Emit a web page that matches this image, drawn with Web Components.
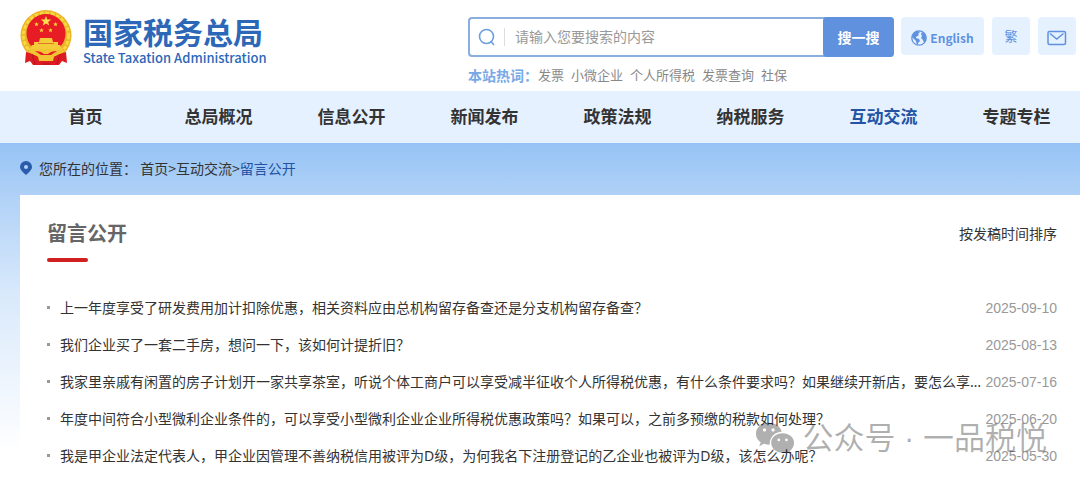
<!DOCTYPE html>
<html lang="zh-CN">
  <head>
    <meta charset="utf-8" />
    <title>留言公开 - 国家税务总局</title>
    <meta name="viewport" content="width=device-width, initial-scale=1" />

    <style>
      body {
        --blue: #5f91de;
        --deep-blue: #2353a5;
        --pale: #e5f1ff;
        margin: 0;
        font: 14px/20px "Noto Sans CJK SC", sans-serif;
        color: #333;
        background: #fff;
        overflow: hidden;
      }
    </style>

    <template id="site-header">
      <style>
        :host {
          display: flex;
          justify-content: space-between;
          padding: 8px 4px 6px 20px;
        }
        .tools {
          display: grid;
          grid-template-columns: 426px auto;
          column-gap: 7px;
          row-gap: 8px;
          padding-top: 9px;
        }
      </style>
      <site-logo></site-logo>
      <div class="tools">
        <search-box></search-box>
        <quick-links></quick-links>
        <hot-words></hot-words>
      </div>
    </template>

    <template id="site-logo">
      <style>
        :host {
          display: block;
        }
        a {
          display: flex;
          gap: 11px;
          color: #2c67b8;
          text-decoration: none;
        }
        svg {
          width: 52px;
          height: 58px;
        }
        .name {
          display: block;
          font-size: 30px;
          line-height: 36px;
          font-weight: 700;
          margin-top: 5px;
        }
        .en {
          display: block;
          font-size: 13px;
          line-height: 18px;
          font-weight: 500;
        }
      </style>
      <a href="#">
        <svg viewBox="0 0 52 58" aria-hidden="true">
          <!-- wreath -->
          <circle cx="26" cy="27.500" r="25.500" fill="#eab42b" />
          <circle cx="26" cy="27.500" r="22.500" fill="none" stroke="#f9d83e" stroke-width="3" stroke-dasharray="4 1.500" />
          <circle cx="26" cy="25.500" r="19.500" fill="#e81c24" />
          <!-- drapes -->
          <path d="M6 44 L14 46 L20 50 L32 50 L38 46 L46 44 L47 55 L42 53 L39 57 H13 L10 53 L5 55 Z" fill="#dc1b22" />
          <path d="M26 8 l1.300 3.600 h3.900 l-3.100 2.300 1.200 3.700 -3.300 -2.200 -3.300 2.200 1.200 -3.700 -3.100 -2.300 h3.900z" fill="#ffe04a" />
          <g fill="#ffd83a">
            <path id="s" d="M16.500 14 l.6 1.600 h1.700 l-1.300 1 .5 1.700 -1.500 -1 -1.500 1 .5 -1.700 -1.300 -1 h1.700z" />
            <use href="#s" x="19" />
            <use href="#s" x="5" y="6" />
            <use href="#s" x="14" y="6" />
          </g>
          <!-- gate -->
          <path d="M20 30 h12 l1 4 h5 v3 h2 l2 4 H10 l2 -4 h2 v-3 h5z" fill="#f5cb3a" />
          <path d="M18 35.500 h16" stroke="#dc7a22" stroke-width="1" />
          <!-- cogwheel and ribbon -->
          <path d="M9 41 H43 L42 45 L33 49 H19 L10 45 Z" fill="#f2c333" />
          <path d="M15 43 q6 0 9 3 h4 q3 -3 9 -3 l-6 4 H21z" fill="#e81c24" />
          <path d="M18 49 h16 l-1 4 h-14z" fill="#f2c333" />
          <path d="M12 46 l3 10 M40 46 l-3 10 M22 56 h8" fill="none" stroke="#b9121a" stroke-width="1" />
        </svg>
        <span>
          <span class="name">国家税务总局</span>
          <span class="en">State Taxation Administration</span>
        </span>
      </a>
    </template>

    <template id="search-box">
      <style>
        :host {
          display: block;
        }
        form {
          display: flex;
          align-items: center;
          height: 40px;
          box-sizing: border-box;
          border: 2px solid #8aaee0;
          border-right: 0;
          border-radius: 4px;
        }
        svg {
          width: 18px;
          height: 18px;
          margin: 0 8px;
        }
        input {
          flex: 1;
          min-width: 0;
          border: 0;
          border-left: 1px solid #ddd;
          outline: none;
          padding: 0 10px 2px;
          height: 18px;
          box-sizing: border-box;
          font: inherit;
          background: none;
        }
        input::placeholder {
          color: #999;
        }
        button {
          width: 71px;
          height: 40px;
          border: 0;
          border-radius: 4px;
          background: var(--blue);
          color: #fff;
          font: inherit;
          font-weight: 700;
          padding: 0;
          cursor: pointer;
        }
      </style>
      <form>
        <svg viewBox="0 0 18 18" fill="none" stroke="#6b9fe0" stroke-width="1.600" aria-hidden="true">
          <circle cx="8.500" cy="8.500" r="7" />
          <path d="M12.500 13 L16 17" />
        </svg>
        <input type="text" placeholder="请输入您要搜索的内容" aria-label="搜索" />
        <button type="button">搜一搜</button>
      </form>
    </template>

    <template id="hot-words">
      <style>
        :host {
          display: flex;
          font-size: 13px;
          color: #888;
        }
        strong {
          font-size: 14px;
          color: #77a9e6;
        }
        nav {
          display: flex;
          gap: 7px;
        }
        a {
          color: inherit;
          text-decoration: none;
        }
      </style>
      <strong>本站热词：</strong>
      <nav>
        <a href="#">发票</a>
        <a href="#">小微企业</a>
        <a href="#">个人所得税</a>
        <a href="#">发票查询</a>
        <a href="#">社保</a>
      </nav>
    </template>

    <template id="quick-links">
      <style>
        :host {
          display: flex;
          gap: 8px;
        }
        a {
          display: flex;
          align-items: center;
          justify-content: center;
          gap: 3px;
          width: 38px;
          height: 38px;
          border-radius: 4px;
          background: var(--pale);
          color: var(--blue);
          font-size: 13px;
          text-decoration: none;
        }
        .en {
          width: 83px;
          font-size: 12px;
          font-weight: 700;
        }
        .en, .mail {
          box-sizing: border-box;
          padding-top: 4px;
        }
      </style>
      <a class="en" href="#">
        <svg width="16" height="16" viewBox="0 0 16 16" aria-hidden="true">
          <circle cx="8" cy="8" r="7.200" fill="#e5f1ff" stroke="#5f91de" stroke-width="1.300" />
          <path d="M1 7 Q2 2 7 1 L9 2 7 4 8 5 5 7 5 8 8 9 9 11 7 13 7 15 Q5 14 5 11 L3 9Z M11 2 Q15 4 15 8 Q15 11 13 13 L12 10 10 8 11 6 10 4Z" fill="#5f91de" />
        </svg>
        English
      </a>
      <a href="#">繁</a>
      <a class="mail" href="#" aria-label="邮箱">
        <svg width="20" height="16" viewBox="0 0 20 16" fill="none" stroke="#5f91de" stroke-width="1.500" aria-hidden="true">
          <rect x="1" y="1.500" width="17.500" height="13" rx="1.500" />
          <path d="M3 3.500 L9.750 9 L16.500 3.500" />
        </svg>
      </a>
    </template>

    <template id="main-nav">
      <style>
        :host {
          display: block;
          background: var(--pale);
          overflow: hidden;
        }
        nav {
          display: flex;
          padding: 0 0 2px 19px;
        }
      </style>
      <nav><slot></slot></nav>
    </template>

    <template id="nav-item">
      <style>
        :host {
          flex: 1 0 133px;
          text-align: center;
        }
        a {
          color: #333;
          font-size: 17px;
          font-weight: 700;
          line-height: 50px;
          text-decoration: none;
        }
        :host([active]) a {
          color: var(--deep-blue);
        }
      </style>
      <a href="#"><slot></slot></a>
    </template>

    <template id="crumb-bar">
      <style>
        :host {
          display: flex;
          align-items: center;
          height: 50px;
          padding-bottom: 2px;
        }
        svg {
          width: 12px;
          height: 14px;
          margin-right: 7px;
        }
        a {
          color: inherit;
          text-decoration: none;
        }
        .here {
          color: var(--deep-blue);
        }
      </style>
      <svg viewBox="0 0 12 14" aria-hidden="true">
        <path d="M6 0 a6 6 0 0 1 6 6 c0 3 -3 5 -6 8 c-3 -3 -6 -5 -6 -8 a6 6 0 0 1 6 -6z" fill="#2b5cab" />
        <circle cx="6" cy="6" r="2" fill="#b4d4f8" />
      </svg>
      <span>您所在的位置： <a href="#">首页</a>&gt;<a href="#">互动交流</a>&gt;<a class="here" href="#">留言公开</a></span>
    </template>

    <template id="message-panel">
      <style>
        :host {
          display: block;
          padding: 24px 23px 7px 27px;
          background: #fff;
        }
        header {
          display: flex;
          justify-content: space-between;
          align-items: center;
        }
        h1 {
          margin: 0;
          font-size: 20px;
          line-height: 28px;
          color: #666;
        }
        hr {
          width: 41px;
          height: 4px;
          margin: 11px 0 27px;
          border: 0;
          border-radius: 2px;
          background: #d02020;
        }
        button {
          border: 0;
          padding: 0;
          background: none;
          color: inherit;
          font: inherit;
        }
      </style>
      <header>
        <h1>留言公开</h1>
        <button type="button">按发稿时间排序</button>
      </header>
      <hr />
      <div role="list"><slot></slot></div>
    </template>

    <template id="message-row">
      <style>
        :host {
          display: flex;
          align-items: center;
          height: 37px;
          white-space: nowrap;
        }
        :host::before {
          content: "";
          width: 3px;
          height: 3px;
          margin-right: 10px;
          background: #999;
        }
        a {
          flex: 1;
          font-family: "Noto Sans", "Noto Sans CJK SC", sans-serif;
          color: inherit;
          text-decoration: none;
        }
        time {
          font-family: "Liberation Sans", sans-serif;
          color: #999;
        }
      </style>
      <a href="#"><slot></slot></a>
      <time></time>
    </template>

    <template id="account-mark">
      <style>
        :host {
          position: absolute;
          right: 33px;
          top: 418px;
          display: flex;
          align-items: center;
          gap: 7px;
          font-family: "Liberation Sans", "Noto Sans CJK SC", sans-serif;
          font-size: 31px;
          line-height: 42px;
          color: rgba(0, 0, 0, 0.31);
          white-space: nowrap;
          pointer-events: none;
        }
      </style>
      <svg width="40" height="36" viewBox="0 0 42 36" fill="currentColor" fill-rule="evenodd" aria-hidden="true">
        <path d="M14.500 1 C6.500 1 1 6 1 12.500 c0 4 2 7 5 9 l-1.500 4 5 -2.500 q3 1 6 1 C15 16 21 11 28 10.500 C27 5 21.500 1 14.500 1z M8.300 8.500 a1.700 1.700 0 1 0 3.400 0 a1.700 1.700 0 1 0 -3.400 0z M17.300 8.500 a1.700 1.700 0 1 0 3.400 0 a1.700 1.700 0 1 0 -3.400 0z" />
        <path d="M29 12 c-7 0 -12 4.500 -12 10 s5 10.500 12 10.500 q2.500 0 4.500 -.7 l4 2.200 -1 -3.500 c3 -2 4.500 -5 4.500 -8.500 0 -5.500 -5 -10 -12 -10z M23.600 19 a1.400 1.400 0 1 0 2.800 0 a1.400 1.400 0 1 0 -2.800 0z M31.600 19 a1.400 1.400 0 1 0 2.800 0 a1.400 1.400 0 1 0 -2.800 0z" />
      </svg>
      <span><slot></slot></span>
    </template>

    <template id="page-body">
      <style>
        :host {
          display: block;
          padding-left: 20px;
          background: linear-gradient(#96c3f5, #b0d1f7 52px, #d8e9fb 150px, #fff 310px);
        }
      </style>
      <slot></slot>
    </template>
  </head>

  <body>
    <site-header></site-header>
    <main-nav>
      <nav-item>首页</nav-item>
      <nav-item>总局概况</nav-item>
      <nav-item>信息公开</nav-item>
      <nav-item>新闻发布</nav-item>
      <nav-item>政策法规</nav-item>
      <nav-item>纳税服务</nav-item>
      <nav-item active>互动交流</nav-item>
      <nav-item>专题专栏</nav-item>
    </main-nav>
    <page-body>
      <crumb-bar></crumb-bar>
      <message-panel>
        <message-row date="2025-09-10">上一年度享受了研发费用加计扣除优惠，相关资料应由总机构留存备查还是分支机构留存备查？</message-row>
        <message-row date="2025-08-13">我们企业买了一套二手房，想问一下，该如何计提折旧？</message-row>
        <message-row date="2025-07-16">我家里亲戚有闲置的房子计划开一家共享茶室，听说个体工商户可以享受减半征收个人所得税优惠，有什么条件要求吗？如果继续开新店，要怎么享…</message-row>
        <message-row date="2025-06-20">年度中间符合小型微利企业条件的，可以享受小型微利企业企业所得税优惠政策吗？如果可以，之前多预缴的税款如何处理？</message-row>
        <message-row date="2025-05-30">我是甲企业法定代表人，甲企业因管理不善纳税信用被评为D级，为何我名下注册登记的乙企业也被评为D级，该怎么办呢？</message-row>
      </message-panel>
    </page-body>
    <account-mark>公众号 · 一品税悦</account-mark>

    <script>
      class TemplateElement extends HTMLElement {
        constructor() {
          super();
          const template = document.getElementById(this.localName);
          this.attachShadow({ mode: 'open' }).append(template.content.cloneNode(true));
        }
      }

      [
        'site-header',
        'site-logo',
        'search-box',
        'hot-words',
        'quick-links',
        'main-nav',
        'nav-item',
        'page-body',
        'crumb-bar',
        'message-panel',
        'account-mark',
      ].forEach((name) => customElements.define(name, class extends TemplateElement {}));

      customElements.define(
        'message-row',
        class extends TemplateElement {
          connectedCallback() {
            const time = this.shadowRoot.querySelector('time');
            time.dateTime = time.textContent = this.getAttribute('date');
            this.setAttribute('role', 'listitem');
          }
        }
      );
    </script>
  </body>
</html>
